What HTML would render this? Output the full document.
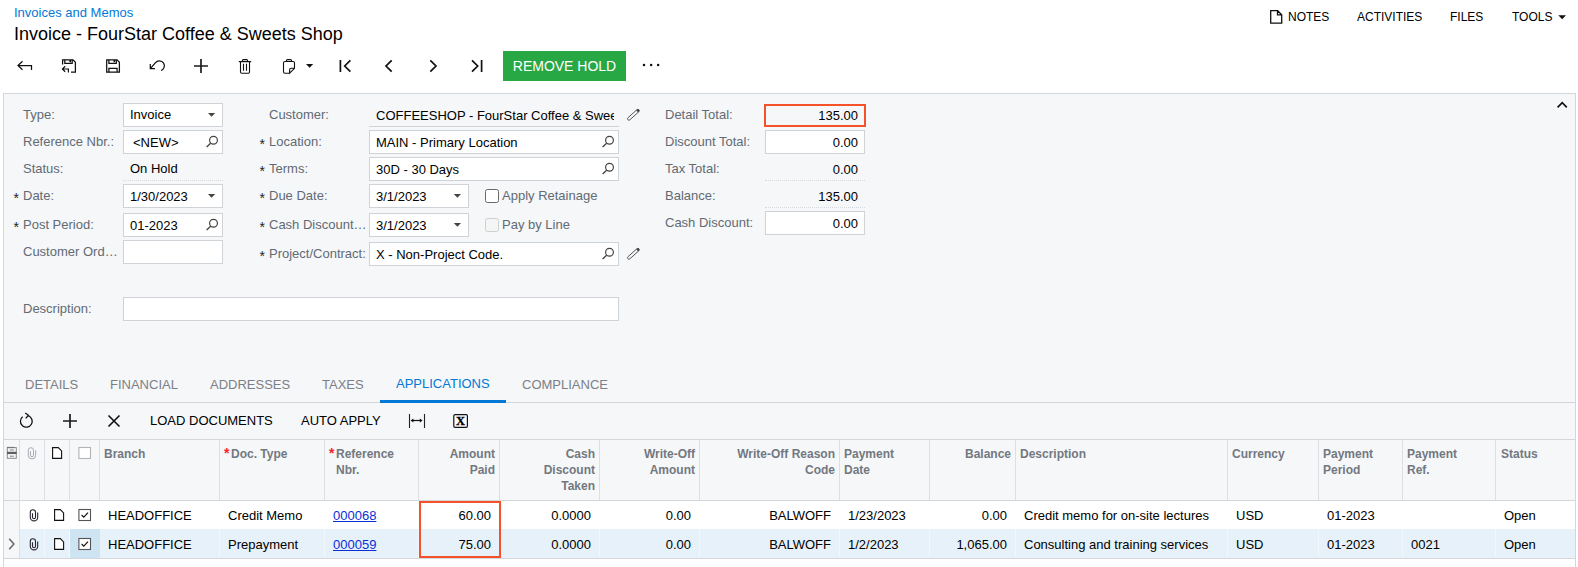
<!DOCTYPE html>
<html><head><meta charset="utf-8">
<style>
*{box-sizing:border-box;margin:0;padding:0}
html,body{width:1578px;height:567px;overflow:hidden;background:#fff}
body{font-family:"Liberation Sans",Arial,sans-serif;font-size:13px;color:#000;position:relative}
.a{position:absolute;white-space:nowrap}
.bc{left:14px;top:5px;font-size:13px;color:#0278d7;line-height:15px}
.title{left:14px;top:23px;font-size:18px;line-height:22px;color:#000}
.tm{font-size:12px;top:10px;line-height:14px;color:#000}
.btn{left:503px;top:51px;width:123px;height:30px;background:#28a745;color:#fff;font-size:14px;line-height:30px;text-align:center}
.panel{left:3px;top:93px;width:1573px;height:480px;background:#f5f7f9;border:1px solid #d3d6da;border-bottom:none}
.lbl{color:#626a73;font-size:13px;line-height:16px}
.ast{position:absolute;left:-9.5px;top:2px;font-size:14px;line-height:16px;color:#222}
.inp{background:#fff;border:1px solid #cfd3d8;height:24px;font-size:13px;line-height:24px;padding-left:6px;color:#000;overflow:hidden}
.ro{background:transparent;border:none;border-bottom:1px dotted #d6d9dd;padding-left:7px;line-height:26px}
.ro.num{padding-right:7px;padding-left:0}
.num{text-align:right;padding-right:6px;padding-left:0}
.tab{top:377px;font-size:13px;line-height:16px;color:#7b8087}
.gt{top:413px;font-size:13px;line-height:16px;color:#000}
.hdr{top:446px;font-size:12px;font-weight:bold;color:#737880;line-height:16px;white-space:normal}
.r{text-align:right}
.cell{font-size:13px;line-height:16px;color:#000}
.vl{width:1px;background:#dcdfe3;top:440px;height:60px}
svg{position:absolute;overflow:visible}
</style></head><body>
<div class="a bc">Invoices and Memos</div>
<div class="a title">Invoice - FourStar Coffee &amp; Sweets Shop</div>

<div class="a tm" style="left:1288px">NOTES</div>
<div class="a tm" style="left:1357px">ACTIVITIES</div>
<div class="a tm" style="left:1450px">FILES</div>
<div class="a tm" style="left:1512px">TOOLS</div>

<div class="a btn">REMOVE HOLD</div>

<div class="a panel"></div>

<!-- column 1 -->
<div class="a lbl" style="left:23px;top:107px">Type:</div>
<div class="a lbl" style="left:23px;top:134px">Reference Nbr.:</div>
<div class="a lbl" style="left:23px;top:161px">Status:</div>
<div class="a lbl req" style="left:23px;top:188px"><span class="ast">*</span>Date:</div>
<div class="a lbl req" style="left:23px;top:217px"><span class="ast">*</span>Post Period:</div>
<div class="a lbl" style="left:23px;top:244px">Customer Ord…</div>
<div class="a lbl" style="left:23px;top:301px">Description:</div>

<div class="a inp" style="left:123px;top:103px;width:100px;line-height:22px">Invoice</div>
<div class="a inp" style="left:123px;top:130px;width:100px;padding-left:9px">&lt;NEW&gt;</div>
<div class="a inp ro" style="left:123px;top:157px;width:100px;line-height:24px">On Hold</div>
<div class="a inp" style="left:123px;top:184px;width:100px">1/30/2023</div>
<div class="a inp" style="left:123px;top:213px;width:100px">01-2023</div>
<div class="a inp" style="left:123px;top:240px;width:100px"></div>
<div class="a inp" style="left:123px;top:297px;width:496px"></div>

<!-- column 2 -->
<div class="a lbl" style="left:269px;top:107px">Customer:</div>
<div class="a lbl req" style="left:269px;top:134px"><span class="ast">*</span>Location:</div>
<div class="a lbl req" style="left:269px;top:161px"><span class="ast">*</span>Terms:</div>
<div class="a lbl req" style="left:269px;top:188px"><span class="ast">*</span>Due Date:</div>
<div class="a lbl req" style="left:269px;top:217px"><span class="ast">*</span>Cash Discount…</div>
<div class="a lbl req" style="left:269px;top:246px"><span class="ast">*</span>Project/Contract:</div>

<div class="a inp ro" style="left:369px;top:103px;width:250px;border-bottom:1px solid #d0d4d8"><span style="display:block;width:238px;overflow:hidden">COFFEESHOP - FourStar Coffee &amp; Sweets Shop</span></div>
<div class="a inp" style="left:369px;top:130px;width:250px">MAIN - Primary Location</div>
<div class="a inp" style="left:369px;top:157px;width:250px">30D - 30 Days</div>
<div class="a inp" style="left:369px;top:184px;width:100px">3/1/2023</div>
<div class="a inp" style="left:369px;top:213px;width:100px">3/1/2023</div>
<div class="a inp" style="left:369px;top:242px;width:250px">X - Non-Project Code.</div>

<div class="a" style="left:485px;top:189px;width:14px;height:14px;border:1px solid #6b6b6b;border-radius:2.5px;background:#fff"></div>
<div class="a lbl" style="left:502px;top:188px">Apply Retainage</div>
<div class="a" style="left:485px;top:218px;width:14px;height:14px;border:1px solid #cfcfcf;border-radius:2.5px;background:#f4f5f5"></div>
<div class="a lbl" style="left:502px;top:217px">Pay by Line</div>

<!-- column 3 -->
<div class="a lbl" style="left:665px;top:107px">Detail Total:</div>
<div class="a lbl" style="left:665px;top:134px">Discount Total:</div>
<div class="a lbl" style="left:665px;top:161px">Tax Total:</div>
<div class="a lbl" style="left:665px;top:188px">Balance:</div>
<div class="a lbl" style="left:665px;top:215px">Cash Discount:</div>

<div class="a inp num" style="left:764px;top:104px;width:102px;height:23px;background:transparent;border:2px solid #f5512a;line-height:20px;padding-right:6px">135.00</div>
<div class="a inp num" style="left:765px;top:130px;width:100px">0.00</div>
<div class="a inp ro num" style="left:765px;top:157px;width:100px">0.00</div>
<div class="a inp ro num" style="left:765px;top:184px;width:100px">135.00</div>
<div class="a inp num" style="left:765px;top:211px;width:100px">0.00</div>

<!-- tabs -->
<div class="a tab" style="left:25px">DETAILS</div>
<div class="a tab" style="left:110px">FINANCIAL</div>
<div class="a tab" style="left:210px">ADDRESSES</div>
<div class="a tab" style="left:322px">TAXES</div>
<div class="a tab" style="left:396px;color:#0278d7;top:376px">APPLICATIONS</div>
<div class="a tab" style="left:522px">COMPLIANCE</div>
<div class="a" style="left:4px;top:402px;width:1571px;height:1px;background:#d3d6da"></div>
<div class="a" style="left:380px;top:400px;width:126px;height:3px;background:#0278d7"></div>

<!-- grid toolbar -->
<div class="a gt" style="left:150px">LOAD DOCUMENTS</div>
<div class="a gt" style="left:301px">AUTO APPLY</div>
<div class="a" style="left:4px;top:439px;width:1571px;height:1px;background:#d3d6da"></div>

<!-- grid rows bg -->
<div class="a" style="left:4px;top:500px;width:1571px;height:67px;background:#fff"></div>
<div class="a" style="left:4px;top:500px;width:1571px;height:1px;background:#d3d6da"></div>
<div class="a" style="left:4px;top:529px;width:1571px;height:29px;background:#e6f1f9"></div>
<div class="a" style="left:4px;top:558px;width:1571px;height:1px;background:#d3d6da"></div>


<div class="a" style="left:44px;top:529px;width:1px;height:29px;background:rgba(255,255,255,.45)"></div><div class="a" style="left:69px;top:529px;width:1px;height:29px;background:rgba(255,255,255,.45)"></div><div class="a" style="left:99px;top:529px;width:1px;height:29px;background:rgba(255,255,255,.45)"></div><div class="a" style="left:219px;top:529px;width:1px;height:29px;background:rgba(255,255,255,.45)"></div><div class="a" style="left:324px;top:529px;width:1px;height:29px;background:rgba(255,255,255,.45)"></div><div class="a" style="left:418px;top:529px;width:1px;height:29px;background:rgba(255,255,255,.45)"></div><div class="a" style="left:499px;top:529px;width:1px;height:29px;background:rgba(255,255,255,.45)"></div><div class="a" style="left:599px;top:529px;width:1px;height:29px;background:rgba(255,255,255,.45)"></div><div class="a" style="left:699px;top:529px;width:1px;height:29px;background:rgba(255,255,255,.45)"></div><div class="a" style="left:839px;top:529px;width:1px;height:29px;background:rgba(255,255,255,.45)"></div><div class="a" style="left:929px;top:529px;width:1px;height:29px;background:rgba(255,255,255,.45)"></div><div class="a" style="left:1015px;top:529px;width:1px;height:29px;background:rgba(255,255,255,.45)"></div><div class="a" style="left:1227px;top:529px;width:1px;height:29px;background:rgba(255,255,255,.45)"></div><div class="a" style="left:1318px;top:529px;width:1px;height:29px;background:rgba(255,255,255,.45)"></div><div class="a" style="left:1402px;top:529px;width:1px;height:29px;background:rgba(255,255,255,.45)"></div><div class="a" style="left:1495px;top:529px;width:1px;height:29px;background:rgba(255,255,255,.45)"></div>
<div class="a" style="left:70px;top:529px;width:30px;height:29px;background:#cfe4f3"></div>
<!-- grid -->
<div class="a" style="left:4px;top:501px;width:15px;height:57px;background:#f5f7f9"></div>
<div class="a" style="left:19px;top:501px;width:1px;height:57px;background:#dcdfe3"></div>
<div class="a vl" style="left:19px"></div>
<div class="a vl" style="left:44px"></div>
<div class="a vl" style="left:69px"></div>
<div class="a vl" style="left:99px"></div>
<div class="a vl" style="left:219px"></div>
<div class="a vl" style="left:324px"></div>
<div class="a vl" style="left:418px"></div>
<div class="a vl" style="left:499px"></div>
<div class="a vl" style="left:599px"></div>
<div class="a vl" style="left:699px"></div>
<div class="a vl" style="left:839px"></div>
<div class="a vl" style="left:929px"></div>
<div class="a vl" style="left:1015px"></div>
<div class="a vl" style="left:1227px"></div>
<div class="a vl" style="left:1318px"></div>
<div class="a vl" style="left:1402px"></div>
<div class="a vl" style="left:1495px"></div>
<div class="a hdr" style="left:104px">Branch</div>
<div class="a" style="left:224px;top:445px;font-size:14px;font-weight:bold;line-height:16px;color:#f5222d">*</div><div class="a hdr" style="left:231px">Doc. Type</div>
<div class="a" style="left:329px;top:445px;font-size:14px;font-weight:bold;line-height:16px;color:#f5222d">*</div><div class="a hdr" style="left:336px">Reference<br>Nbr.</div>
<div class="a hdr r" style="left:420px;width:75px">Amount<br>Paid</div>
<div class="a hdr r" style="left:503px;width:92px">Cash<br>Discount<br>Taken</div>
<div class="a hdr r" style="left:603px;width:92px">Write-Off<br>Amount</div>
<div class="a hdr r" style="left:703px;width:132px">Write-Off Reason<br>Code</div>
<div class="a hdr" style="left:844px">Payment<br>Date</div>
<div class="a hdr r" style="left:931px;width:80px">Balance</div>
<div class="a hdr" style="left:1020px">Description</div>
<div class="a hdr" style="left:1232px">Currency</div>
<div class="a hdr" style="left:1323px">Payment<br>Period</div>
<div class="a hdr" style="left:1407px">Payment<br>Ref.</div>
<div class="a hdr" style="left:1501px">Status</div>
<div class="a cell" style="left:108px;top:508px">HEADOFFICE</div>
<div class="a cell" style="left:228px;top:508px">Credit Memo</div>
<div class="a cell" style="left:333px;top:508px;color:#0b2fd6;text-decoration:underline">000068</div>
<div class="a cell r" style="left:371px;width:120px;top:508px">60.00</div>
<div class="a cell r" style="left:471px;width:120px;top:508px">0.0000</div>
<div class="a cell r" style="left:571px;width:120px;top:508px">0.00</div>
<div class="a cell r" style="left:711px;width:120px;top:508px">BALWOFF</div>
<div class="a cell" style="left:848px;top:508px">1/23/2023</div>
<div class="a cell r" style="left:887px;width:120px;top:508px">0.00</div>
<div class="a cell" style="left:1024px;top:508px">Credit memo for on-site lectures</div>
<div class="a cell" style="left:1236px;top:508px">USD</div>
<div class="a cell" style="left:1327px;top:508px">01-2023</div>
<div class="a cell" style="left:1504px;top:508px">Open</div>
<div class="a cell" style="left:108px;top:537px">HEADOFFICE</div>
<div class="a cell" style="left:228px;top:537px">Prepayment</div>
<div class="a cell" style="left:333px;top:537px;color:#0b2fd6;text-decoration:underline">000059</div>
<div class="a cell r" style="left:371px;width:120px;top:537px">75.00</div>
<div class="a cell r" style="left:471px;width:120px;top:537px">0.0000</div>
<div class="a cell r" style="left:571px;width:120px;top:537px">0.00</div>
<div class="a cell r" style="left:711px;width:120px;top:537px">BALWOFF</div>
<div class="a cell" style="left:848px;top:537px">1/2/2023</div>
<div class="a cell r" style="left:887px;width:120px;top:537px">1,065.00</div>
<div class="a cell" style="left:1024px;top:537px">Consulting and training services</div>
<div class="a cell" style="left:1236px;top:537px">USD</div>
<div class="a cell" style="left:1327px;top:537px">01-2023</div>
<div class="a cell" style="left:1411px;top:537px">0021</div>
<div class="a cell" style="left:1504px;top:537px">Open</div>
<div class="a" style="left:419px;top:501px;width:82px;height:57px;border:2px solid #f5512a"></div>

<svg class="a" style="left:0;top:0" width="1578" height="567" viewBox="0 0 1578 567" fill="none" stroke="#111" stroke-width="1.25" stroke-linecap="butt" stroke-linejoin="miter">
<!-- back arrow -->
<path d="M22.5 61.3 L18 65.5 L22.5 69.7 M18 65.5 H31.5 V70"/>
<!-- save & close -->
<path d="M62.6 64.5 V59.8 H73 L75.4 62.2 V72.2 H71"/>
<path d="M64.8 59.8 V63.3 H72.2 V59.8"/>
<path d="M70.2 60 V62.2" stroke-width="1.6"/>
<path d="M65.2 66.3 L62.4 69 L65.2 71.7 M62.4 69 H68.4 V72.6" stroke-width="1.2"/>
<!-- save -->
<path d="M106.7 59.8 H117 L119.4 62.2 V72.2 H106.7 Z"/>
<path d="M108.9 59.8 V63.3 H116.3 V59.8"/>
<path d="M114.3 60 V62.2" stroke-width="1.6"/>
<path d="M108.9 72.2 V68.3 H117.1 V72.2"/>
<!-- undo -->
<path d="M150.3 64 V68.6 H155 M150.6 68.3 L155.5 62.6 A5 5 0 1 1 161 70.5"/>
<!-- plus -->
<path d="M194 66 H208 M201 59 V73" stroke-width="1.7" stroke="#1c1c1c"/>
<!-- trash -->
<path d="M238.8 61.6 H251.2 M242.4 61.4 V60.6 Q242.4 59.6 243.4 59.6 H246.6 Q247.6 59.6 247.6 60.6 V61.4 M240.5 61.8 V72 Q240.5 73.2 241.7 73.2 H248.3 Q249.5 73.2 249.5 72 V61.8 M243.5 63.8 V70.8 M246.5 63.8 V70.8" stroke-width="1.1"/>
<!-- clipboard -->
<path d="M289.6 73.2 H285 Q283.5 73.2 283.5 71.7 V63 Q283.5 61.5 285 61.5 H293 Q294.5 61.5 294.5 63 V68.3 L289.6 73.2 V70 Q289.6 68.3 291.3 68.3 H294.5 M286.4 61.4 V60.8 Q286.4 59.6 287.6 59.6 H290.4 Q291.6 59.6 291.6 60.8 V61.4" stroke-width="1.1"/>
<path d="M306 64 H313.2 L309.6 67.7 Z" fill="#111" stroke="none"/>
<!-- first -->
<path d="M340.4 60 V72 M350.4 60.3 L344.7 66 L350.4 71.7" stroke-width="1.7"/>
<!-- prev -->
<path d="M391.7 60.3 L386 66 L391.7 71.7" stroke-width="1.7"/>
<!-- next -->
<path d="M430.3 60.3 L436 66 L430.3 71.7" stroke-width="1.7"/>
<!-- last -->
<path d="M472 60.3 L477.7 66 L472 71.7 M481.6 60 V72" stroke-width="1.7"/>
<!-- dots -->
<g fill="#111" stroke="none"><circle cx="644" cy="65" r="1.25"/><circle cx="651.1" cy="65" r="1.25"/><circle cx="658.1" cy="65" r="1.25"/></g>
<!-- notes icon -->
<path d="M1270.7 10.7 H1277.7 L1281.7 14.7 V23.2 H1270.7 Z M1277.5 10.9 V14.9 H1281.5" stroke-width="1.3"/>
<!-- tools caret -->
<path d="M1558.3 15.2 H1566 L1562.15 19.2 Z" fill="#111" stroke="none"/>
<!-- collapse chevron -->
<path d="M1557.6 107.3 L1562.2 102.7 L1566.8 107.3" stroke-width="1.7"/>
<path d="M208.0 113 H215.2 L211.6 116.7 Z" fill="#444" stroke="none"/>
<path d="M208.0 194 H215.2 L211.6 197.7 Z" fill="#444" stroke="none"/>
<path d="M453.79999999999995 194 H461.0 L457.4 197.7 Z" fill="#444" stroke="none"/>
<path d="M453.79999999999995 223 H461.0 L457.4 226.7 Z" fill="#444" stroke="none"/>
<circle cx="213.5" cy="140.3" r="3.9" stroke="#444" stroke-width="1.2"/><path d="M210.6 143.20000000000002 L206.6 147.1" stroke="#444" stroke-width="1.35"/>
<circle cx="213.5" cy="223.3" r="3.9" stroke="#444" stroke-width="1.2"/><path d="M210.6 226.20000000000002 L206.6 230.1" stroke="#444" stroke-width="1.35"/>
<circle cx="609.5" cy="140.3" r="3.9" stroke="#444" stroke-width="1.2"/><path d="M606.6 143.20000000000002 L602.6 147.1" stroke="#444" stroke-width="1.35"/>
<circle cx="609.5" cy="167.3" r="3.9" stroke="#444" stroke-width="1.2"/><path d="M606.6 170.20000000000002 L602.6 174.1" stroke="#444" stroke-width="1.35"/>
<circle cx="609.5" cy="252.3" r="3.9" stroke="#444" stroke-width="1.2"/><path d="M606.6 255.20000000000002 L602.6 259.1" stroke="#444" stroke-width="1.35"/>
<path d="M629.84 119.84 L638.84 111.74 A1.4 1.4 0 0 0 636.96 109.66 L627.96 117.76 A1.4 1.4 0 0 0 629.84 119.84 Z" stroke="#555" stroke-width="1"/><path d="M638.09 112.41 L638.84 111.74 A1.4 1.4 0 0 0 636.96 109.66 L636.22 110.33 Z" fill="#444" stroke="none"/>
<path d="M629.84 258.84 L638.84 250.74 A1.4 1.4 0 0 0 636.96 248.66 L627.96 256.76 A1.4 1.4 0 0 0 629.84 258.84 Z" stroke="#555" stroke-width="1"/><path d="M638.09 251.41 L638.84 250.74 A1.4 1.4 0 0 0 636.96 248.66 L636.22 249.33 Z" fill="#444" stroke="none"/>
<path d="M28.3 415.75 A5.9 5.9 0 1 1 22.6 416.7" stroke-width="1.3"/>
<path d="M25.2 413 L28.5 415.3 L25.7 418.4" stroke-width="1.3"/>
<path d="M63 421 H77 M70 414 V428" stroke-width="1.7" stroke="#1c1c1c"/>
<path d="M108.5 415.5 L119.5 426.5 M119.5 415.5 L108.5 426.5" stroke-width="1.6"/>
<path d="M409.5 414 V428 M424.5 414 V428" stroke-width="1.1" stroke="#222"/>
<path d="M412.5 420.5 H420.5" stroke-width="1.2"/>
<path d="M410.6 420.5 L413.4 418.6 V422.4 Z M422.6 420.5 L419.8 418.6 V422.4 Z" fill="#111" stroke="none"/>
<rect x="453.8" y="414.7" width="13.6" height="12.6" rx="1.3" fill="#fff" stroke-width="1.2"/>
<text x="460.6" y="425.1" text-anchor="middle" style="font-family:'Liberation Serif',serif;font-weight:bold;font-size:12.5px" fill="#000" stroke="#000" stroke-width="0.35">X</text>
<g stroke="#8a8a8a" stroke-width="1"><rect x="7.3" y="447.6" width="9" height="10.7"/><path d="M7 452.9 H16.6" stroke-width="2.3" stroke="#5e5e5e"/><path d="M9.8 450 H13.8 M9.8 456.2 H13.8" stroke="#777" stroke-width="0.9"/><path d="M7 447.5 H14.5" stroke="#777" stroke-width="1.2"/></g>
<path d="M35.7 450.4 V455.2 A3.7 3.7 0 0 1 28.3 455.2 V450.3 A2.6 2.6 0 0 1 33.5 450.3 V455.2 A1.5 1.5 0 0 1 30.5 455.2 V451.2" stroke="#a8a8b4" stroke-width="1"/>
<path d="M52.6 447.6 H58.3 L61.6 450.9 V458.4 H52.6 Z" fill="#fff" stroke="#111" stroke-width="1.1"/>
<rect x="78.9" y="447.5" width="11.6" height="11" fill="#fff" stroke="#b4b4b4" stroke-width="1.1"/>
<path d="M37.7 512.4 V517.2 A3.7 3.7 0 0 1 30.3 517.2 V512.3 A2.6 2.6 0 0 1 35.5 512.3 V517.2 A1.5 1.5 0 0 1 32.5 517.2 V513.2" stroke="#2a2230" stroke-width="1.1"/>
<path d="M54.6 509.6 H60.3 L63.6 512.9 V520.4 H54.6 Z" fill="#fff" stroke="#111" stroke-width="1.1"/>
<rect x="78.9" y="509.5" width="11.6" height="11" fill="#fff" stroke="#555" stroke-width="1.1"/><path d="M81.60000000000001 515 L83.80000000000001 517.2 L88.0 512.6" stroke="#111" stroke-width="1.15"/>
<path d="M37.7 541.4 V546.2 A3.7 3.7 0 0 1 30.3 546.2 V541.3 A2.6 2.6 0 0 1 35.5 541.3 V546.2 A1.5 1.5 0 0 1 32.5 546.2 V542.2" stroke="#2a2230" stroke-width="1.1"/>
<path d="M54.6 538.6 H60.3 L63.6 541.9 V549.4 H54.6 Z" fill="#fff" stroke="#111" stroke-width="1.1"/>
<rect x="78.9" y="538.5" width="11.6" height="11" fill="#fff" stroke="#555" stroke-width="1.1"/><path d="M81.60000000000001 544 L83.80000000000001 546.2 L88.0 541.6" stroke="#111" stroke-width="1.15"/>
<path d="M9.2 538.7 L13.9 544 L9.2 549.3" stroke="#666" stroke-width="1.5"/>
</svg>

</body></html>
